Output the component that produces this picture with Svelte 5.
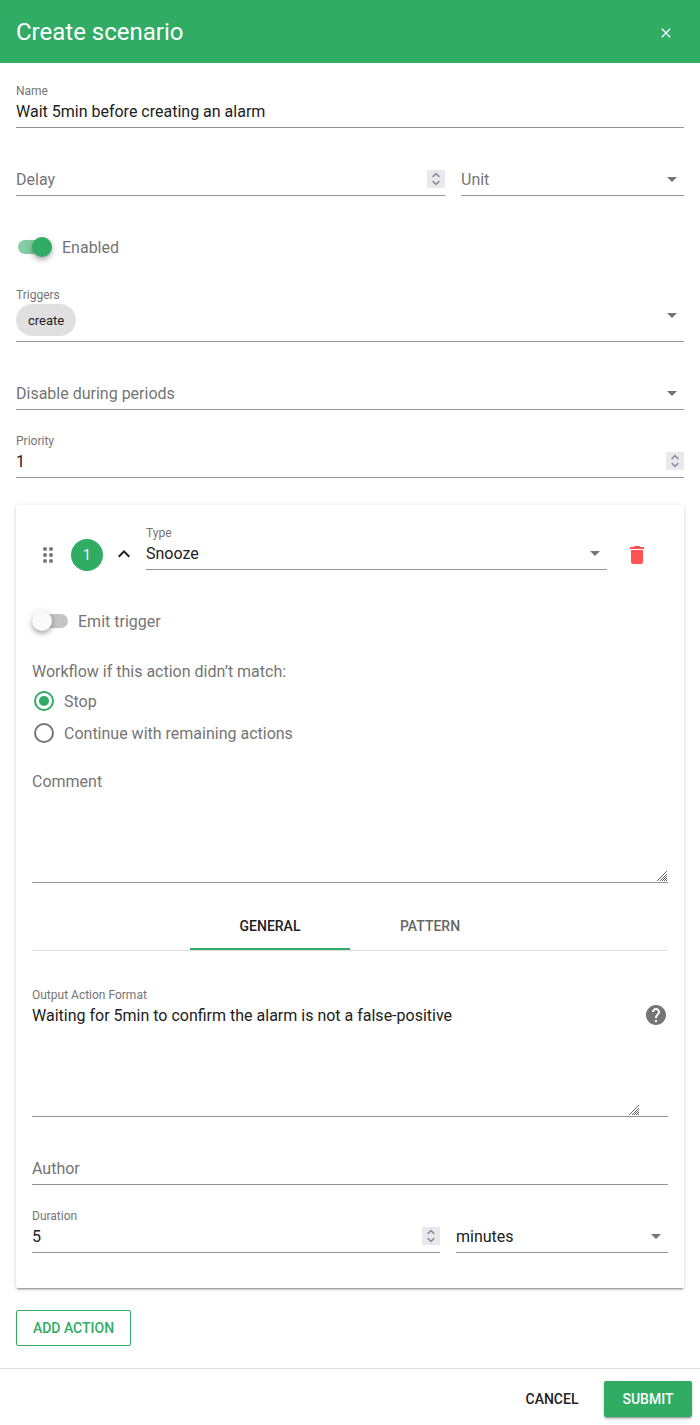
<script>
  let name = $state('Wait 5min before creating an alarm');
  let tab = $state('general');
  let enabled = $state(true);
  let emitTrigger = $state(false);
  let workflow = $state('stop');
  const options = [
    { value: 'stop', text: 'Stop' },
    { value: 'continue', text: 'Continue with remaining actions' },
  ];
</script>

{#snippet caret()}
  <svg class="caret" width="24" height="24" viewBox="0 0 24 24"><path d="M7 10l5 5 5-5z" fill="#757575" /></svg>
{/snippet}

{#snippet stepper()}
  <svg class="stepper" width="18" height="18" viewBox="0 0 18 18">
    <rect width="18" height="18" fill="#e9e9ed" />
    <path d="M5.6 6.8L9 3.7l3.4 3.1M5.6 11.2L9 14.3l3.4-3.1" fill="none" stroke="#8f8f9d" stroke-width="1.6" />
  </svg>
{/snippet}

{#snippet grip()}
  <svg class="grip" width="10" height="10" viewBox="0 0 10 10">
    <path d="M0 10L10 0M3 10L10 3M5 10L10 5M7 10L10 7M9 10L10 9" fill="none" stroke="#606060" stroke-width="0.95" />
  </svg>
{/snippet}

{#snippet field(label, value, kind)}
  <div class="field">
    <div class="label">{value ? label : ''}</div>
    <div class="row">
      <span class={value ? 'value' : 'placeholder'}>{value || label}</span>
      {#if kind === 'select'}{@render caret()}{/if}
      {#if kind === 'number'}{@render stepper()}{/if}
    </div>
  </div>
{/snippet}

<div class="dialog">
  <header>
    <h1>Create scenario</h1>
    <button class="close" aria-label="Close">
      <svg width="10" height="10" viewBox="0 0 10 10"><path d="M.8.8l8.4 8.4M9.2.8L.8 9.2" stroke="#fff" stroke-width="1.35" /></svg>
    </button>
  </header>

  <main>
    {@render field('Name', name)}
    <div class="split delay">
      {@render field('Delay', '', 'number')}
      {@render field('Unit', '', 'select')}
    </div>
    <div class="switch-row">
      <button class="switch" class:on={enabled} aria-label="Enabled" onclick={() => (enabled = !enabled)}><i></i></button>
      <span>Enabled</span>
    </div>
    <div class="field chips">
      <div class="label">Triggers</div>
      <div class="row"><span class="chip">create</span>{@render caret()}</div>
    </div>
    {@render field('Disable during periods', '', 'select')}
    {@render field('Priority', '1', 'number')}

    <section class="card">
      <div class="action-head">
        <svg class="drag" width="24" height="24" viewBox="0 0 24 24" fill="#757575">
          <circle cx="9" cy="6" r="2" /><circle cx="15" cy="6" r="2" />
          <circle cx="9" cy="12" r="2" /><circle cx="15" cy="12" r="2" />
          <circle cx="9" cy="18" r="2" /><circle cx="15" cy="18" r="2" />
        </svg>
        <span class="badge">1</span>
        <svg class="chevron" width="24" height="24" viewBox="0 0 24 24"><path d="M7.41 15.41L12 10.83l4.59 4.58L18 14l-6-6-6 6z" fill="#212121" /></svg>
        {@render field('Type', 'Snooze', 'select')}
        <svg class="trash" width="24" height="24" viewBox="0 0 24 24"><path d="M6 19c0 1.1.9 2 2 2h8c1.1 0 2-.9 2-2V7H6v12zM19 4h-3.5l-1-1h-5l-1 1H5v2h14V4z" fill="#ff5252" /></svg>
      </div>

      <div class="switch-row">
        <button class="switch" class:on={emitTrigger} aria-label="Emit trigger" onclick={() => (emitTrigger = !emitTrigger)}><i></i></button>
        <span>Emit trigger</span>
      </div>

      <div class="radios">
        <div class="legend">Workflow if this action didn’t match:</div>
        {#each options as o}
          <button class="radio" class:checked={workflow === o.value} onclick={() => (workflow = o.value)}>
            <i></i><span>{o.text}</span>
          </button>
        {/each}
      </div>

      <div class="area comment">
        <span class="placeholder">Comment</span>
        {@render grip()}
      </div>

      <nav>
        <button class:active={tab === 'general'} onclick={() => (tab = 'general')}>General</button>
        <button class:active={tab === 'pattern'} onclick={() => (tab = 'pattern')}>Pattern</button>
      </nav>

      <div class="area output">
        <div class="text">
          <div class="label">Output Action Format</div>
          <span class="value">Waiting for 5min to confirm the alarm is not a false-positive</span>
          {@render grip()}
        </div>
        <svg class="help" width="24" height="24" viewBox="0 0 24 24"><path d="M12 2C6.48 2 2 6.48 2 12s4.48 10 10 10 10-4.48 10-10S17.52 2 12 2zm1 17h-2v-2h2v2zm2.07-7.75l-.9.92C13.45 12.9 13 13.5 13 15h-2v-.5c0-1.1.45-2.1 1.17-2.83l1.24-1.26c.37-.36.59-.86.59-1.41 0-1.1-.9-2-2-2s-2 .9-2 2H8c0-2.21 1.79-4 4-4s4 1.79 4 4c0 .88-.36 1.68-.93 2.25z" fill="#757575" /></svg>
      </div>

      {@render field('Author', '')}
      <div class="split duration">
        {@render field('Duration', '5', 'number')}
        {@render field('', 'minutes', 'select')}
      </div>
    </section>

    <button class="btn outline">Add action</button>
  </main>

  <footer>
    <button class="btn flat">Cancel</button>
    <button class="btn primary">Submit</button>
  </footer>
</div>

<style>
  :global(body) { background: #fff; }
  .dialog {
    height: 1425px;
    display: flex;
    flex-direction: column;
    box-sizing: border-box;
    font-family: Roboto, sans-serif;
    font-size: 16px;
    color: #212121;
  }
  .dialog :global(*) { box-sizing: border-box; }
  button { font: inherit; color: inherit; background: none; border: 0; padding: 0; }
  svg { display: block; flex: none; }
  header {
    height: 63px;
    flex: none;
    background: #30ac64;
    color: #fff;
    display: flex;
    align-items: center;
    justify-content: space-between;
    padding: 0 29px 0 16px;
  }
  h1 { margin: 0; font-size: 24px; font-weight: 400; line-height: 32px; }
  .close { padding-top: 3px; }
  main { padding: 17px 16px 0; flex: 1; }

  .field {
    height: 48px;
    margin-bottom: 20px;
    border-bottom: 1px solid #949494;
    flex: 1;
    min-width: 0;
  }
  .label { height: 14px; margin-top: 4px; font-size: 12px; line-height: 14px; color: #757575; }
  .field { display: flow-root; }
  .row { display: flex; justify-content: space-between; align-items: center; height: 24px; margin-top: 1px; line-height: 24px; }
  .placeholder { color: #757575; }
  .row .placeholder, .row .value { padding-top: 1px; }
  .split { display: grid; gap: 16px; }
  .delay { grid-template-columns: 429px 1fr; }
  .duration { grid-template-columns: 408px 1fr; }
  .chips { height: 58px; }
  .chips .row { height: 32px; margin-top: 2px; }
  .chips .caret { margin-bottom: 10px; }
  .chip { height: 32px; padding: 1px 12px 0; border-radius: 16px; background: #e0e0e0; font-size: 13px; line-height: 32px; }

  .switch-row { height: 68px; display: flex; align-items: center; padding: 0 0 6px 2px; gap: 10px; color: #757575; }
  .switch-row span { padding-top: 1px; }
  .switch { width: 34px; height: 14px; border-radius: 8px; background: #c4c4c4; display: flex; align-items: center; }
  .switch i {
    flex: none;
    width: 20px;
    height: 20px;
    margin-left: -2px;
    border-radius: 50%;
    background: #fafafa;
    box-shadow: 0 2px 4px -1px rgba(0, 0, 0, .2), 0 4px 5px rgba(0, 0, 0, .14), 0 1px 10px rgba(0, 0, 0, .12);
  }
  .switch.on { background: #83cda2; }
  .switch.on i { margin-left: 14px; background: #30ac64; }

  .card {
    height: 783px;
    margin-top: 27px;
    padding: 17px 16px 0;
    border-radius: 2px;
    box-shadow: 0 3px 1px -2px rgba(0, 0, 0, .2), 0 2px 2px rgba(0, 0, 0, .14), 0 1px 5px rgba(0, 0, 0, .12);
  }
  .action-head { display: flex; align-items: center; height: 66px; padding: 0 19px 0 4px; }
  .action-head :global(.field) { align-self: flex-start; }
  .badge { width: 32px; height: 32px; margin-left: 11px; border-radius: 50%; background: #30ac64; color: #fff; text-align: center; line-height: 33px; font-size: 14px; }
  .chevron { margin: 0 10px 3px 9px; }
  .trash { margin-left: 18px; }
  .card .switch-row { padding-bottom: 2px; }

  .radios { height: 112px; padding-top: 3px; color: #757575; }
  .legend { height: 26px; line-height: 26px; }
  .radio { display: flex; align-items: center; height: 32px; gap: 10px; padding: 0 0 0 2px; }
  .radio span { padding-top: 1px; }
  .radio i { width: 20px; height: 20px; border: 2px solid #757575; border-radius: 50%; display: grid; place-items: center; }
  .radio.checked i { border-color: #30ac64; }
  .radio.checked i::after { content: ''; width: 10px; height: 10px; border-radius: 50%; background: #30ac64; }

  .area { border-bottom: 1px solid #949494; }
  .comment { height: 115px; padding-top: 2px; line-height: 24px; display: flex; flex-direction: column; justify-content: space-between; }
  .grip { align-self: flex-end; margin: 0 1px 1px 0; }
  nav { height: 68px; padding-top: 19px; border-bottom: 1px solid #e0e0e0; display: flex; justify-content: center; }
  nav button { width: 160px; height: 48px; padding-top: 2px; border-bottom: 2px solid transparent; font-size: 14px; font-weight: 500; text-transform: uppercase; color: #666; }
  nav .active { color: #212121; border-color: #30ac64; }
  .output { height: 133px; margin: 33px 0 20px; display: flex; justify-content: space-between; }
  .text { width: 608px; display: flex; flex-direction: column; line-height: 24px; }
  .text .value { padding-top: 2px; }
  .text .grip { margin-top: auto; }
  .help { margin-top: 19px; }

  .btn { height: 36px; border-radius: 2px; font-size: 14px; font-weight: 500; text-transform: uppercase; line-height: 36px; }
  .outline { display: block; width: 115px; margin-top: 22px; border: 1px solid #30ac64; color: #30ac64; line-height: 34px; }
  footer { height: 57px; flex: none; border-top: 1px solid #e0e0e0; display: flex; justify-content: flex-end; align-items: center; gap: 8px; padding: 4px 8px 0 0; }
  .flat { width: 88px; }
  .primary { width: 88px; color: #fff; background: #30ac64; box-shadow: 0 3px 1px -2px rgba(0, 0, 0, .2), 0 2px 2px rgba(0, 0, 0, .14), 0 1px 5px rgba(0, 0, 0, .12); }
</style>
